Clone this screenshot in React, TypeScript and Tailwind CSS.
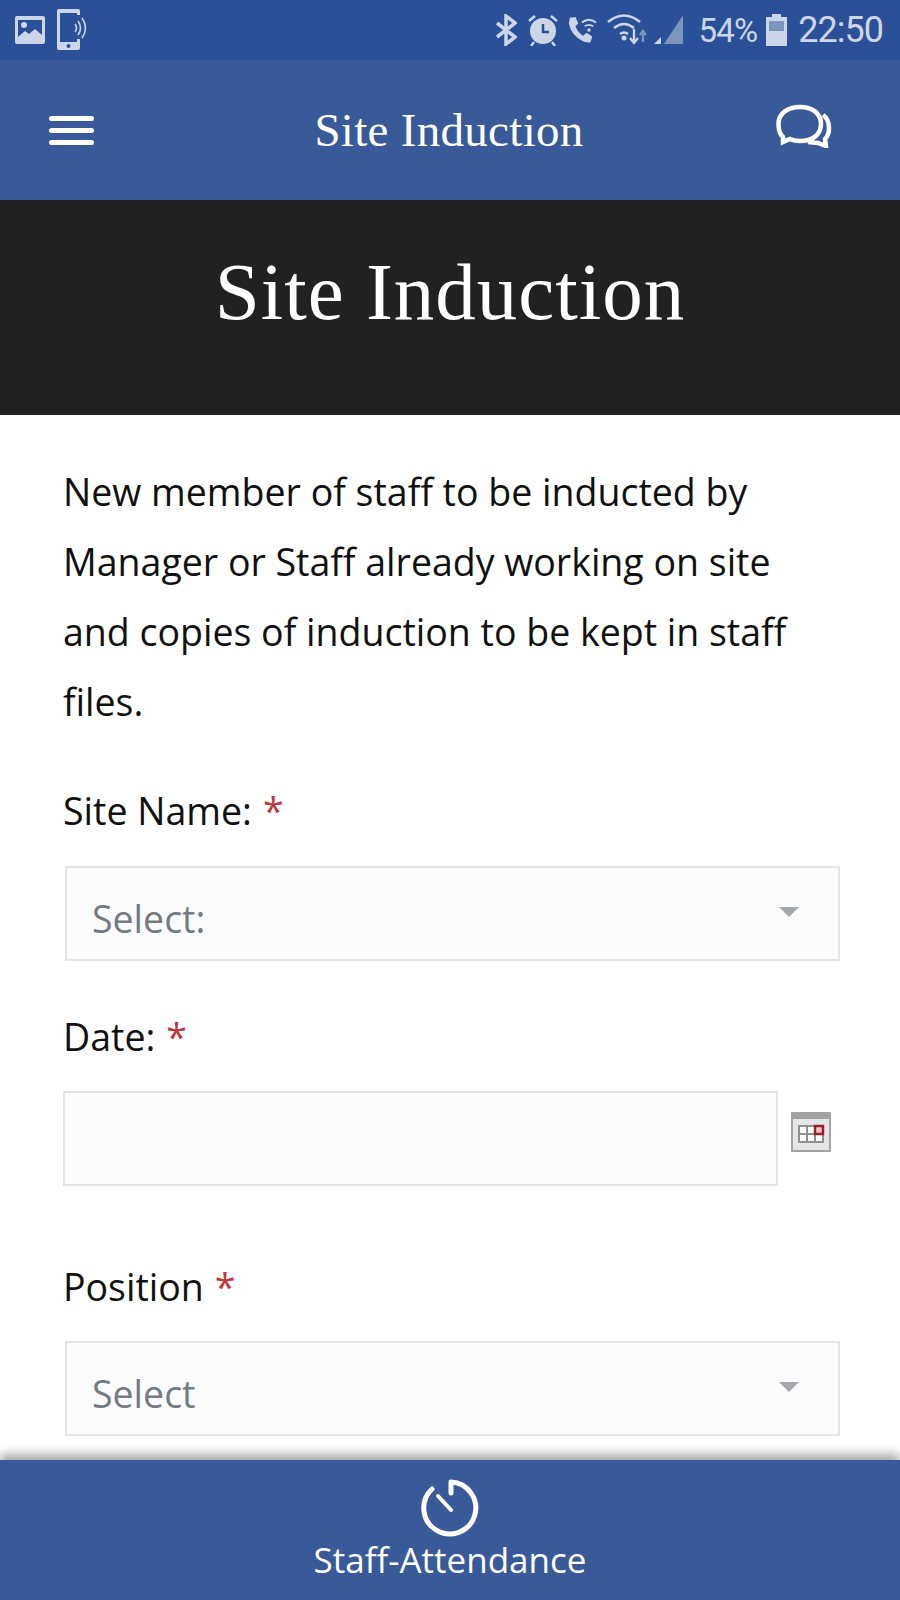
import React from 'react';

const sans = { fontFamily: '"Open Sans", "Noto Sans", sans-serif' };

const StatusLeft = () => (
  <div className="flex items-center gap-[12px]">
    <svg width="30" height="28" viewBox="0 0 30 28">
      <rect width="30" height="28" rx="2" fill="#cdd6e8" />
      <path d="M3 4h24v15l-7-6-6 5-4-3-7 6z" fill="#2a5198" />
      <circle cx="9" cy="9" r="3" fill="#cdd6e8" />
    </svg>
    <svg width="34" height="42" viewBox="0 0 34 42">
      <rect width="23" height="41" rx="2" fill="#cdd6e8" />
      <rect x="3" y="4" width="17" height="29" fill="#2a5198" />
      <circle cx="11.500" cy="37" r="2" fill="#2a5198" />
      <rect x="17" y="6" width="6" height="24" fill="#2a5198" />
      <path d="M18 15q3 4 0 8M21 12q5 7 0 14M25 9q7 10 0 20" fill="none" stroke="#cdd6e8" strokeWidth="1.600" />
    </svg>
  </div>
);

const StatusRight = () => (
  <div className="flex items-center text-[#cdd6e8]">
    <svg width="22" height="32" viewBox="0 0 22 32" fill="none" stroke="#cdd6e8" strokeWidth="3.500" className="mr-[10px]">
      <path d="M2 9l18 14-9 7V2l9 7L2 23" />
    </svg>
    <svg width="32" height="32" viewBox="0 0 32 32" className="mr-[8px]">
      <circle cx="16" cy="17" r="13" fill="#cdd6e8" />
      <path d="M16 10v8h6" fill="none" stroke="#2a5198" strokeWidth="2.500" />
      <path d="M2 7l6-5M30 7l-6-5M7 28l-3 4M25 28l3 4" stroke="#cdd6e8" strokeWidth="2.500" />
    </svg>
    <svg width="30" height="30" viewBox="0 0 32 30" className="mr-[10px]">
      <path d="M3 2l6-1 3 7-3 3q2 6 8 10l4-3 6 4-2 6q-3 1-8-1Q4 20 2 8z" fill="#cdd6e8" />
      <path d="M16 7q7-6 15 0M19 11q4-3 9 0" fill="none" stroke="#cdd6e8" strokeWidth="2" />
      <circle cx="23.500" cy="15" r="1.800" fill="#cdd6e8" />
    </svg>
    <svg width="46" height="32" viewBox="0 0 46 32" className="mr-[1px]">
      <path d="M1 8q16-13 32 0M7 14q10-8 20 0M13 20q4-3 8 0" fill="none" stroke="#cdd6e8" strokeWidth="2.600" />
      <circle cx="17" cy="24" r="2.500" fill="#cdd6e8" />
      <path d="M27 15v13M23 24l4 5 4-5" fill="none" stroke="#cdd6e8" strokeWidth="2.300" />
      <path d="M36 28V18M33 21l3-4 3 4" fill="none" stroke="#7d94bd" strokeWidth="2.300" />
    </svg>
    <svg width="30" height="32" viewBox="0 0 30 32" className="mr-[14px]">
      <path d="M29 1v29H10z" fill="#7d94bd" />
      <path d="M7 23v7H0z" fill="#cdd6e8" />
    </svg>
    <span className="text-[33px] leading-none tracking-[-0.800px] mr-[9px]" style={{ fontFamily: 'Roboto, sans-serif' }}>54%</span>
    <svg width="21" height="32" viewBox="0 0 21 32" className="mr-[11px]">
      <path d="M6 0h9v3h6v29H0V3h6z" fill="#cdd6e8" />
      <rect x="3" y="7" width="15" height="10" fill="#7d94bd" />
    </svg>
    <span className="text-[36px] leading-none tracking-[-1px]" style={{ fontFamily: 'Roboto, sans-serif' }}>22:50</span>
  </div>
);

const Required = () => <span className="text-[#c0363c] ml-[11px]">*</span>;

const SelectBox = ({ text }: { text: string }) => (
  <div className="ml-[2px] w-[775px] h-[95px] border-2 border-[#e4e5e6] bg-[#fcfcfd] flex items-center justify-between pl-[25px] pr-[39px]">
    <span className="text-[37.500px] text-[#757b82] mt-[12px]">{text}</span>
    <span className="w-0 h-0 border-x-[10px] border-x-transparent border-t-[10px] border-t-[#a4a7ab] mb-[4px]" />
  </div>
);

export default function App() {
  return (
    <div className="w-[900px] h-[1600px] flex flex-col overflow-hidden bg-white" style={sans}>
      <div className="h-[60px] shrink-0 bg-[#2a5198] flex items-center justify-between pl-[15px] pr-[17px]">
        <StatusLeft />
        <StatusRight />
      </div>

      <div className="h-[140px] shrink-0 bg-[#385a98] grid grid-cols-[1fr_auto_1fr] items-center pl-[49px] pr-[68px]">
        <div className="flex flex-col gap-[7px] w-[45px]">
          <span className="h-[5px] rounded bg-white" />
          <span className="h-[5px] rounded bg-white" />
          <span className="h-[5px] rounded bg-white" />
        </div>
        <h2 className="text-[47px] text-white tracking-[0.300px] pl-[17px]" style={{ fontFamily: '"Liberation Serif", serif' }}>Site Induction</h2>
        <svg width="56" height="44" viewBox="0 0 56 44" fill="none" stroke="#fff" strokeWidth="4.500" className="mb-[8px] justify-self-end">
          <path d="M7 33q-4.500-4-4.500-13C2.500 9 12 3 24 3s21 6 21 17-9 17-21 17q-6 0-10-2l-7 3z" />
          <path d="M47 11q6 4 6 13 0 7-4 11l1 7-8-3-10-1" />
        </svg>
      </div>

      <div className="h-[215px] shrink-0 bg-[#212121] flex items-center justify-center">
        <h1 className="text-[81px] text-white tracking-[1px] leading-none pb-[30px]" style={{ fontFamily: '"Liberation Serif", serif' }}>Site Induction</h1>
      </div>

      <div className="flex-1 min-h-0 pl-[63px] pt-[42px] text-[#111]">
        <p className="text-[37.500px] leading-[70px] w-[760px]">
          New member of staff to be inducted by Manager or Staff already working on site and copies of induction to be kept in staff files.
        </p>

        <div className="text-[37.500px] leading-[50px] mt-[49px]">Site Name:<Required /></div>
        <div className="mt-[30px]"><SelectBox text="Select:" /></div>

        <div className="text-[37.500px] leading-[50px] mt-[51px]">Date:<Required /></div>
        <div className="mt-[29px] flex items-center">
          <div className="w-[715px] h-[95px] border-2 border-[#e4e5e6] bg-[#fcfcfd]" />
          <svg width="40" height="40" viewBox="0 0 40 40" className="ml-[13px] mb-[14px]">
            <rect width="40" height="40" rx="1" fill="#a3a3a3" />
            <rect x="2" y="7" width="36" height="31" fill="#e6e6e6" />
            <rect x="8" y="14" width="24" height="16" fill="#fff" stroke="#8f8f8f" strokeWidth="2" />
            <path d="M8 22h24M16 14v16M24 14v16" stroke="#8f8f8f" strokeWidth="2" />
            <rect x="24" y="14" width="8" height="8" fill="#f3c6c6" stroke="#9b1c2a" strokeWidth="2.500" />
          </svg>
        </div>

        <div className="text-[37.500px] leading-[50px] mt-[76px]">Position<Required /></div>
        <div className="mt-[29px]"><SelectBox text="Select" /></div>
      </div>

      <div className="h-[140px] shrink-0 bg-[#385a98] flex flex-col items-center pt-[19px] shadow-[0_-6px_10px_rgba(0,0,0,0.35)]">
        <svg width="58" height="58" viewBox="0 0 58 58" fill="none" stroke="#fff" strokeWidth="5" strokeLinecap="round">
          <path d="M30 3a26 26 0 1 1-19 7M30 3v11" />
          <path d="M17 17l13 14" strokeWidth="4" />
        </svg>
        <span className="text-[35px] leading-[46px] text-white">Staff-Attendance</span>
      </div>
    </div>
  );
}
